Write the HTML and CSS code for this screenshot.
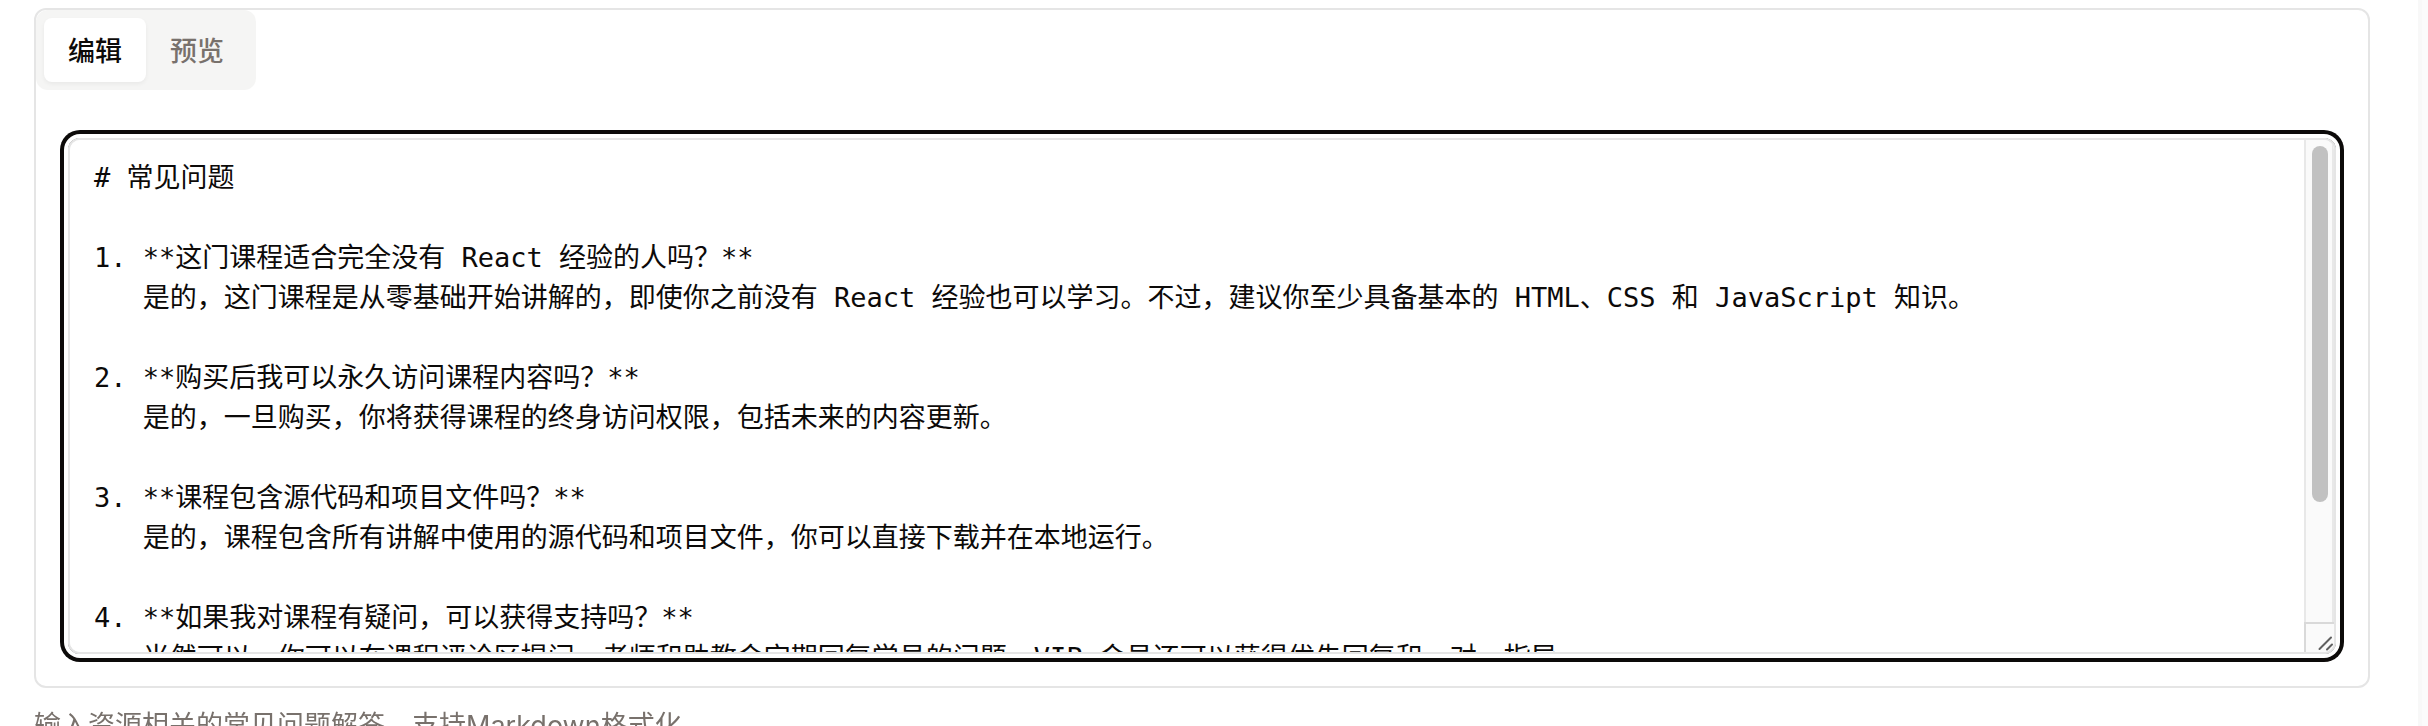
FILE: index.html
```html
<!DOCTYPE html>
<html lang="zh-CN">
<head>
<meta charset="utf-8">
<title>常见问题</title>
<link rel="stylesheet" href="styles.css">
</head>
<body>
<main class="page">
  <section class="card">
    <div class="tabs" role="tablist">
      <button class="tab tab-active" type="button" role="tab" aria-selected="true">编辑</button>
      <button class="tab" type="button" role="tab" aria-selected="false">预览</button>
    </div>
    <div class="panel" role="tabpanel">
      <div class="editor">
        <textarea class="source" aria-label="常见问题" aria-describedby="faq-hint" spellcheck="false">
# 常见问题

1. **这门课程适合完全没有 React 经验的人吗？**
   是的，这门课程是从零基础开始讲解的，即使你之前没有 React 经验也可以学习。不过，建议你至少具备基本的 HTML、CSS 和 JavaScript 知识。

2. **购买后我可以永久访问课程内容吗？**
   是的，一旦购买，你将获得课程的终身访问权限，包括未来的内容更新。

3. **课程包含源代码和项目文件吗？**
   是的，课程包含所有讲解中使用的源代码和项目文件，你可以直接下载并在本地运行。

4. **如果我对课程有疑问，可以获得支持吗？**
   当然可以。你可以在课程评论区提问，老师和助教会定期回复学员的问题。VIP 会员还可以获得优先回复和一对一指导。
</textarea>
        <div class="scrollbar" aria-hidden="true">
          <div class="track"><div class="thumb"></div></div>
          <svg class="grip" viewBox="0 0 28 28"><path d="M13.500 25 25 13.500M21 25.500 26 20.500" /></svg>
        </div>
      </div>
    </div>
  </section>
  <p class="hint" id="faq-hint">输入资源相关的常见问题解答，支持Markdown格式化</p>
</main>
<aside class="edge"></aside>
</body>
</html>
```
FILE: styles.css
```css
* { box-sizing: border-box; }

body {
  display: flex;
  height: 100vh;
  margin: 0;
  overflow: hidden;
  background: #fff;
  color: #0c0a09;
  font: 27px/40px Inter, "Noto Sans CJK SC", sans-serif;
}

.page {
  flex: 1;
  min-width: 0;
  padding: 8px 48px 0 34px;
}

.card {
  border: 2px solid #e5e5e5;
  border-radius: 12px;
}

.tabs {
  display: inline-flex;
  padding: 8px;
  border-radius: 12px;
  background: #f5f5f4;
  vertical-align: top;
}

.tab {
  padding: 14px 24px 10px;
  border: 0;
  border-radius: 8px;
  background: transparent;
  color: #78716c;
  font: inherit;
  font-weight: 500;
}

.tab-active {
  background: #fff;
  color: #0c0a09;
  box-shadow: 0 2px 4px rgba(0, 0, 0, 0.05);
}

.panel {
  padding: 48px 32px 32px;
}

.editor {
  display: flex;
  height: 516px;
  overflow: hidden;
  border: 2px solid #e5e5e5;
  border-radius: 12px;
  box-shadow: 0 0 0 4px #fff, 0 0 0 8px #0c0a09;
}

.source {
  flex: 1;
  min-width: 0;
  padding: 18px 24px;
  border: 0;
  outline: 0;
  resize: none;
  background: #fff;
  color: inherit;
  font: 27px/40px "DejaVu Sans Mono", "Noto Sans CJK SC", monospace;
  scrollbar-width: none;
}

.scrollbar {
  display: flex;
  flex-direction: column;
  width: 30px;
}

.track {
  flex: 1;
  padding: 6px 4px 6px 6px;
  border: solid #e8e8e8;
  border-width: 0 2px;
  background: #fafafa;
}

.thumb {
  width: 16px;
  height: 356px;
  border-radius: 8px;
  background: #c1c1c1;
}

.grip {
  height: 30px;
  border: solid #d9d9d9;
  border-width: 2px 0 0 2px;
  background: #fafafa;
  fill: none;
  stroke: #606060;
  stroke-width: 2;
  stroke-linecap: round;
}

.hint {
  margin: 18px 0 0;
  color: #78716c;
}

.edge {
  width: 10px;
  border-left: 4px solid #f8f8f8;
  background: #fbfbfb;
}
```
